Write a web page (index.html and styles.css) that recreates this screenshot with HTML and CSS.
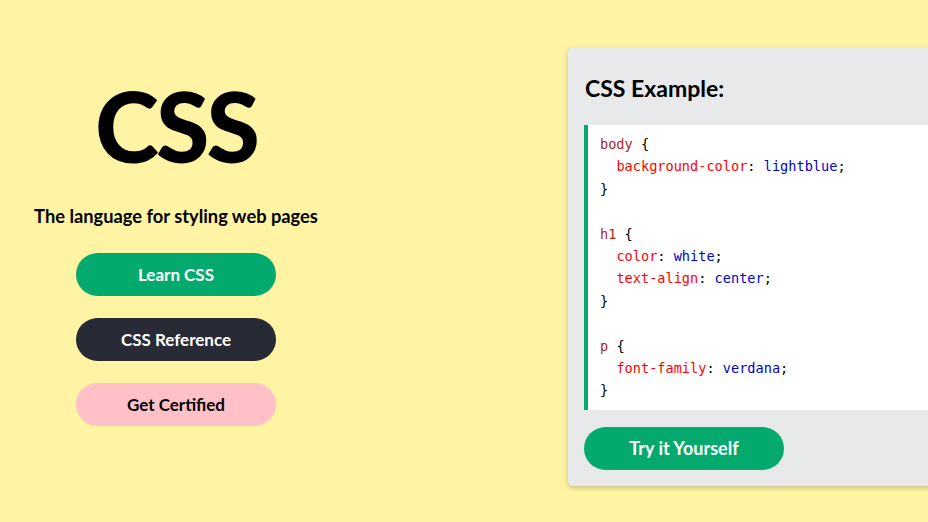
FILE: index.html
```html
<!DOCTYPE html>
<html lang="en">
<head>
<meta charset="utf-8">
<title>CSS</title>
<link rel="stylesheet" href="styles.css">
</head>
<body>
<div class="page">
  <section class="intro">
    <h1 class="title">CSS</h1>
    <p class="tagline">The language for styling web pages</p>
    <a class="btn btn-green">Learn CSS</a>
    <a class="btn btn-dark">CSS Reference</a>
    <a class="btn btn-pink">Get Certified</a>
  </section>
  <section class="card">
    <h3 class="card-title">CSS Example:</h3>
    <div class="code">
      <div class="ln"><span class="sel">body</span> <span class="br">{</span></div>
      <div class="ln ind"><span class="prop">background-color</span><span class="pn">:</span> <span class="val">lightblue</span><span class="pn">;</span></div>
      <div class="ln"><span class="br">}</span></div>
      <div class="ln"></div>
      <div class="ln"><span class="sel">h1</span> <span class="br">{</span></div>
      <div class="ln ind"><span class="prop">color</span><span class="pn">:</span> <span class="val">white</span><span class="pn">;</span></div>
      <div class="ln ind"><span class="prop">text-align</span><span class="pn">:</span> <span class="val">center</span><span class="pn">;</span></div>
      <div class="ln"><span class="br">}</span></div>
      <div class="ln"></div>
      <div class="ln"><span class="sel">p</span> <span class="br">{</span></div>
      <div class="ln ind"><span class="prop">font-family</span><span class="pn">:</span> <span class="val">verdana</span><span class="pn">;</span></div>
      <div class="ln"><span class="br">}</span></div>
    </div>
    <a class="btn btn-green btn-try">Try it Yourself</a>
  </section>
</div>
</body>
</html>
```
FILE: styles.css
```css
html, body {
  margin: 0;
  padding: 0;
}
body {
  background: #fff4a3;
  width: 928px;
  height: 522px;
  overflow: hidden;
  font-family: Lato, "Noto Sans", sans-serif;
  color: #000;
}
.page {
  display: flex;
  align-items: flex-start;
  gap: 216px;
}
.intro {
  width: 352px;
  flex: none;
  display: flex;
  flex-direction: column;
  align-items: center;
  padding-top: 72px;
}
.title {
  margin: 0;
  font-size: 97px;
  line-height: 108px;
  font-weight: 900;
  letter-spacing: -3px;
}
.tagline {
  margin: 23px 0 24px;
  font-size: 18.3px;
  font-weight: 700;
  line-height: 26px;
}
.btn {
  display: flex;
  align-items: center;
  justify-content: center;
  width: 200px;
  height: 43px;
  border-radius: 25px;
  font-size: 17px;
  font-weight: 700;
  text-decoration: none;
  margin-bottom: 22px;
  flex: none;
}
.btn-green { background: #04aa6d; color: #fff; }
.btn-dark { background: #282a35; color: #fff; }
.btn-pink { background: #ffc0c7; color: #000; }
.card {
  flex: none;
  width: 420px;
  margin-top: 47px;
  background: #e7e9eb;
  border-radius: 5px;
  box-shadow: 0 2px 4px rgba(0,0,0,.16), 0 2px 10px rgba(0,0,0,.08);
  padding: 21px 16px 16px;
  box-sizing: border-box;
}
.card-title {
  margin: 0 0 17px 1px;
  font-size: 23px;
  line-height: 40px;
  font-weight: 700;
}
.code {
  background: #fff;
  border-left: 4px solid #04aa6d;
  padding: 8px 12px 8px;
  margin-right: -16px;
  font-family: "DejaVu Sans Mono", "Liberation Mono", monospace;
  font-size: 13.6px;
  color: #000;
}
.ln {
  height: 22.4px;
  line-height: 22.4px;
  white-space: pre;
}
.ind {
  padding-left: 16.4px;
}
.sel { color: #a52a2a; }
.br { color: #000; }
.pn { color: #000; }
.prop { color: #ff0000; }
.val { color: #0000cd; }
.btn-try {
  margin: 17px 0 0;
  font-size: 18px;
}
```
